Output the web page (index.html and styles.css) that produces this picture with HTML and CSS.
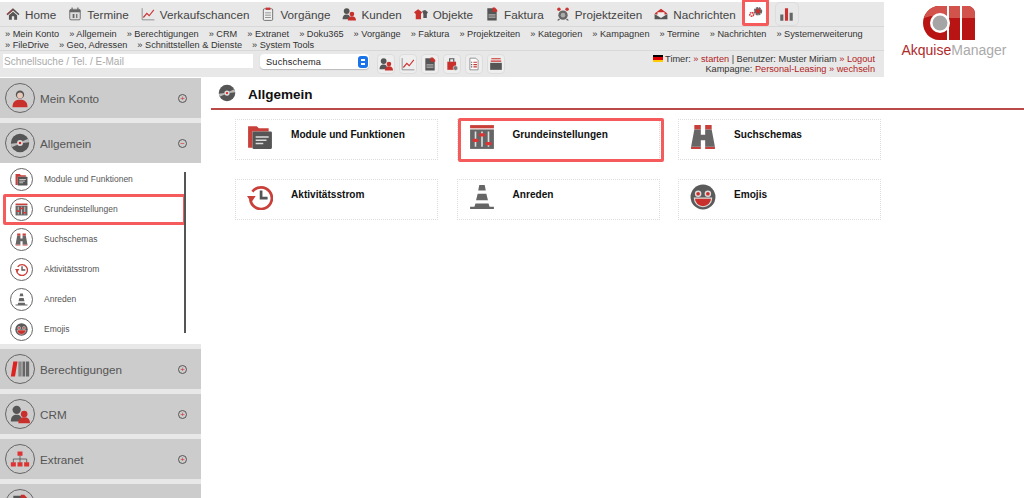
FILE: index.html
```html
<!DOCTYPE html>
<html lang="de">
<head>
  <meta charset="UTF-8" />
  <meta name="viewport" content="width=device-width, initial-scale=1.0" />
  <title>AkquiseManager - Allgemein</title>
  <link rel="stylesheet" href="styles.css">
</head>
<body>
  <svg class="sprite" xmlns="http://www.w3.org/2000/svg">
    <symbol id="i-home" viewBox="0 0 24 24"><path fill="#555" d="M12 2 1 12l1.500 2L12 6l9.500 8 1.500-2zM5 14l7-6 7 6v8h-5v-6h-4v6H5z"/><path fill="#b33" d="M12 2 1 12l1.500 2L12 6z" opacity=".5"/></symbol>
    <symbol id="i-cal" viewBox="0 0 24 24"><rect x="3" y="4" width="18" height="18" rx="2" fill="#ddd" stroke="#666" stroke-width="1.500"/><path fill="#666" d="M3 5h18v4H3zM6 1h2v5H6zM16 1h2v5h-2zM8 12h3v7H8zM14 12h2v7h-2z"/></symbol>
    <symbol id="i-chart" viewBox="0 0 24 24"><path fill="none" stroke="#888" stroke-width="1.500" d="M2 2v20h21"/><path fill="none" stroke="#c33" stroke-width="2" d="M4 18l6-7 4 4 8-10"/></symbol>
    <symbol id="i-clip" viewBox="0 0 24 24"><rect x="4" y="3" width="16" height="20" rx="2" fill="#eee" stroke="#666" stroke-width="1.500"/><rect x="8" y="1" width="8" height="4" fill="#c33"/><path stroke="#888" stroke-width="1.500" d="M7 10h10M7 14h10M7 18h10"/></symbol>
    <symbol id="i-people" viewBox="0 0 24 24"><circle cx="8" cy="7" r="5" fill="#555"/><path fill="#555" d="M1 21c0-6 3-8 7-8s6 2 6 8z"/><circle cx="17" cy="12" r="4" fill="#c9302c"/><path fill="#c9302c" d="M10 23c0-5 3-7 7-7s7 2 7 7z"/></symbol>
    <symbol id="i-obj" viewBox="0 0 24 24"><path fill="#c9302c" d="M0 9l7-5 7 5-2 3v9H3v-9z"/><path fill="#555" d="M14 7l5-2 5 4-2 3v7h-6v-7l-1-2z"/></symbol>
    <symbol id="i-doc" viewBox="0 0 24 24"><path fill="#555" d="M4 2h12l4 4v17H4z"/><path fill="#c9302c" d="M13 1h4l4 4v3h-8z"/><path fill="#999" d="M6 12h12v7H6z"/><path stroke="#555" d="M6 15.500h12"/></symbol>
    <symbol id="i-clock" viewBox="0 0 24 24"><circle cx="12" cy="14" r="8" fill="#666"/><circle cx="12" cy="14" r="4" fill="#aaa"/><path fill="#666" d="M4 20l-2 3h3l2-2zM20 20l2 3h-3l-2-2z"/><circle cx="5" cy="4" r="3" fill="#c33"/><circle cx="19" cy="4" r="3" fill="#c33"/></symbol>
    <symbol id="i-mail" viewBox="0 0 24 24"><path fill="#c9302c" d="M1 11 12 3l11 8-3 2H4z"/><path fill="#eee" d="M6 9h12v5l-6 3-6-3z"/><path fill="#555" d="M1 12l11 7 11-7v9H1z"/></symbol>
    <symbol id="i-gears" viewBox="0 0 24 24"><circle cx="16" cy="10" r="5" fill="#c9302c" stroke="#666" stroke-width="3.500" stroke-dasharray="3 1"/><circle cx="6" cy="15" r="3" fill="#fff" stroke="#d33" stroke-width="2.500" stroke-dasharray="2.500 .8"/></symbol>
    <symbol id="i-bars" viewBox="0 0 24 24"><path fill="#666" d="M2 12h5v10H2zM17 9h5v13h-5z"/><path fill="#c33" d="M9.500 2h5v20h-5z"/></symbol>
    <symbol id="i-bag" viewBox="0 0 24 24"><path fill="#c9302c" d="M4 8h15v14H4z"/><path fill="none" stroke="#555" stroke-width="2" d="M8 8V3h7v5"/><circle cx="18" cy="19" r="4" fill="#777" stroke="#eee"/></symbol>
    <symbol id="i-list" viewBox="0 0 24 24"><path fill="#fff" stroke="#888" stroke-width="1.500" d="M5 2h10l4 4v16H5z"/><path stroke="#c33" stroke-width="2" d="M11 9h6M11 13h6M11 17h6"/><path stroke="#555" stroke-width="2" d="M7 9h2M7 13h2M7 17h2"/></symbol>
    <symbol id="i-box" viewBox="0 0 24 24"><path fill="#c9302c" d="M4 2h16v2H4zM3 6h18v2H3z"/><path fill="#555" d="M2 10h20v12H2z"/></symbol>
    <symbol id="i-person" viewBox="0 0 24 24"><circle cx="12" cy="8" r="5" fill="#555"/><circle cx="12" cy="9" r="3.500" fill="#e8c8b8"/><path fill="#c9302c" d="M3 23c0-7 4-9 9-9s9 2 9 9z"/></symbol>
    <symbol id="i-disc" viewBox="0 0 24 24"><circle cx="12" cy="12" r="11" fill="#555"/><path fill="#bbb" d="M1 13l8-1v2l-7 3zM23 11l-8 1v-2l7-3z"/><circle cx="12" cy="12" r="3.500" fill="#ddd"/><circle cx="12" cy="12" r="1.500" fill="#d22"/></symbol>
    <symbol id="i-folder" viewBox="0 0 24 24"><path fill="#c9403a" d="M1 2h8l2 2h9v3H5v15H1z"/><rect x="5" y="7" width="18" height="16" rx="1" fill="#555"/><path stroke="#ddd" stroke-width="1.500" d="M8 12h12M8 15h10M8 18h7"/></symbol>
    <symbol id="i-mixer" viewBox="0 0 24 24"><path fill="#c9403a" d="M1 1h22v3H1z"/><path fill="#666" d="M1 5h22v18H1z"/><path stroke="#ddd" stroke-width="1.500" d="M6 7v14M12 7v14M18 7v14"/><path stroke="#d33" stroke-width="3" stroke-linecap="round" d="M4.500 15h3M10.500 10h3M16.500 18h3"/></symbol>
    <symbol id="i-bino" viewBox="0 0 24 24"><path fill="#c9403a" d="M4 1h6v4H4zM14 1h6v4h-6zM1 21h9v2H1zM14 21h9v2h-9z"/><path fill="#666" d="M4 5h6v5h4V5h6l3 16h-9v-6h-4v6H1z"/></symbol>
    <symbol id="i-hist" viewBox="0 0 24 24"><path fill="none" stroke="#c9403a" stroke-width="2.500" d="M5 7a10 10 0 1 1-2 7"/><path fill="#c9403a" d="M0 11h8l-4 6z"/><path fill="none" stroke="#555" stroke-width="2.500" d="M13 6v7h6"/></symbol>
    <symbol id="i-cone" viewBox="0 0 24 24"><path fill="#666" d="M9.500 1h5l1 5h-7zM8 9h8l1.500 6h-11zM6 18h12l1 3h4v2H1v-2h4z"/></symbol>
    <symbol id="i-emoji" viewBox="0 0 24 24"><circle cx="12" cy="12" r="11.500" fill="#5a5a5a"/><circle cx="7.500" cy="9" r="3" fill="#ddd"/><circle cx="16.500" cy="9" r="3" fill="#ddd"/><circle cx="7.500" cy="9" r="1.700" fill="#c9302c"/><circle cx="16.500" cy="9" r="1.700" fill="#c9302c"/><path fill="#c9302c" stroke="#ddd" d="M4 13h16c0 5-4 8-8 8s-8-3-8-8z"/></symbol>
    <symbol id="i-books" viewBox="0 0 24 24"><path fill="#d22" d="M4 3h5L6 21H1z"/><path fill="#888" d="M10 3h4v18h-4z"/><path fill="#666" d="M15 3h3v18h-3zM19 3h4v18h-4z"/></symbol>
    <symbol id="i-net" viewBox="0 0 24 24"><path fill="#d33" d="M9 3h6v5H9zM1 16h6v5H1zM9 16h6v5H9zM17 16h6v5h-6z"/><path fill="none" stroke="#555" d="M12 8v8M4 16v-4h16v4"/></symbol>
  </svg>

  <header class="top">
    <div class="top-bars">
      <nav class="main-nav">
        <a class="nav-item"><svg><use href="#i-home"/></svg>Home</a>
        <a class="nav-item"><svg><use href="#i-cal"/></svg>Termine</a>
        <a class="nav-item"><svg><use href="#i-chart"/></svg>Verkaufschancen</a>
        <a class="nav-item"><svg><use href="#i-clip"/></svg>Vorgänge</a>
        <a class="nav-item"><svg><use href="#i-people"/></svg>Kunden</a>
        <a class="nav-item"><svg><use href="#i-obj"/></svg>Objekte</a>
        <a class="nav-item"><svg><use href="#i-doc"/></svg>Faktura</a>
        <a class="nav-item"><svg><use href="#i-clock"/></svg>Projektzeiten</a>
        <a class="nav-item"><svg><use href="#i-mail"/></svg>Nachrichten</a>
        <a class="nav-tab nav-tab-marked"><svg><use href="#i-gears"/></svg></a>
        <a class="nav-tab"><svg><use href="#i-bars"/></svg></a>
      </nav>
      <div class="sub-nav">
        <a>» Mein Konto</a><a>» Allgemein</a><a>» Berechtigungen</a><a>» CRM</a><a>» Extranet</a><a>» Doku365</a><a>» Vorgänge</a><a>» Faktura</a><a>» Projektzeiten</a><a>» Kategorien</a><a>» Kampagnen</a><a>» Termine</a><a>» Nachrichten</a><a>» Systemerweiterung</a><a>» FileDrive</a><a>» Geo, Adressen</a><a>» Schnittstellen &amp; Dienste</a><a>» System Tools</a>
      </div>
      <div class="tool-row">
        <input class="quick-search" type="text" placeholder="Schnellsuche / Tel. / E-Mail" />
        <div class="schema-select">Suchschema<span class="stepper"><i></i><i></i></span></div>
        <div class="tool-icons">
          <a><svg><use href="#i-people"/></svg></a>
          <a><svg><use href="#i-chart"/></svg></a>
          <a><svg><use href="#i-doc"/></svg></a>
          <a><svg><use href="#i-bag"/></svg></a>
          <a><svg><use href="#i-list"/></svg></a>
          <a><svg><use href="#i-box"/></svg></a>
        </div>
        <div class="status">
          <div><span class="flag"></span> Timer: <b>» starten</b> | Benutzer: Muster Miriam <b>» Logout</b></div>
          <div>Kampagne: <b>Personal-Leasing » wechseln</b></div>
        </div>
      </div>
    </div>
    <div class="logo">
      <svg class="logo-mark" viewBox="0 0 52 34">
        <path fill="#b81414" d="M16 0h8v34h-8C7 34 0 26 0 17S7 0 16 0zM26 0h11v34H26zM39 0h5c5 0 8 3 8 8v26H39z"/>
        <path fill="#d2524c" d="M16 0h8v10H8L1 12C3 5 9 0 16 0zM26 0h11v12H26zM39 0h5c5 0 8 3 8 8v4H39z"/>
        <circle cx="17" cy="17" r="10" fill="#fff"/>
        <circle cx="17" cy="17" r="7.500" fill="#a5a5a5"/>
      </svg>
      <div class="logo-text"><span>Akquise</span>Manager</div>
    </div>
  </header>

  <div class="content">
    <aside class="sidebar">
      <div class="side-head"><span class="side-icon"><svg><use href="#i-person"/></svg></span>Mein Konto<span class="toggle">+</span></div>
      <div class="side-head"><span class="side-icon"><svg><use href="#i-disc"/></svg></span>Allgemein<span class="toggle">−</span></div>
      <ul class="side-list">
        <li><span class="sub-icon"><svg><use href="#i-folder"/></svg></span>Module und Funktionen</li>
        <li class="marked"><span class="sub-icon"><svg><use href="#i-mixer"/></svg></span>Grundeinstellungen</li>
        <li><span class="sub-icon"><svg><use href="#i-bino"/></svg></span>Suchschemas</li>
        <li><span class="sub-icon"><svg><use href="#i-hist"/></svg></span>Aktivitätsstrom</li>
        <li><span class="sub-icon"><svg><use href="#i-cone"/></svg></span>Anreden</li>
        <li><span class="sub-icon"><svg><use href="#i-emoji"/></svg></span>Emojis</li>
      </ul>
      <div class="side-head"><span class="side-icon"><svg><use href="#i-books"/></svg></span>Berechtigungen<span class="toggle">+</span></div>
      <div class="side-head"><span class="side-icon"><svg><use href="#i-people"/></svg></span>CRM<span class="toggle">+</span></div>
      <div class="side-head"><span class="side-icon"><svg><use href="#i-net"/></svg></span>Extranet<span class="toggle">+</span></div>
      <div class="side-head"><span class="side-icon"><svg><use href="#i-doc"/></svg></span></div>
    </aside>

    <main class="main">
      <h1 class="page-title"><svg><use href="#i-disc"/></svg>Allgemein</h1>
      <div class="cards">
        <a class="card"><svg><use href="#i-folder"/></svg>Module und Funktionen</a>
        <a class="card marked"><svg><use href="#i-mixer"/></svg>Grundeinstellungen</a>
        <a class="card"><svg><use href="#i-bino"/></svg>Suchschemas</a>
        <a class="card"><svg><use href="#i-hist"/></svg>Aktivitätsstrom</a>
        <a class="card"><svg><use href="#i-cone"/></svg>Anreden</a>
        <a class="card"><svg><use href="#i-emoji"/></svg>Emojis</a>
      </div>
    </main>
  </div>
</body>
</html>
```

FILE: styles.css
```css
* {
  box-sizing: border-box;
}
html, body {
  height: 498px;
  overflow: hidden;
}
body {
  margin: 0;
  padding-top: 2px;
  font-family: "Liberation Sans", Arial, sans-serif;
  background: #fff;
  color: #444;
}
.sprite {
  display: none;
}

/* top area */
.top {
  display: flex;
  height: 76px;
}
.top-bars {
  width: 884px;
  height: 75px;
  background: #e8e8e8;
}
.main-nav {
  display: flex;
  align-items: center;
  height: 24px;
  padding-left: 6px;
  font-size: 11.7px;
  color: #444;
}
.nav-item {
  display: flex;
  align-items: center;
  margin-right: 12px;
}
.nav-item svg {
  width: 14px;
  height: 14px;
  margin-right: 5px;
}
.nav-tab {
  display: flex;
  align-items: center;
  justify-content: center;
  width: 24px;
  height: 24px;
  margin-right: 6px;
  border: 1px solid #ddd;
  border-radius: 5px;
}
.nav-tab svg {
  width: 15px;
  height: 15px;
}
.nav-tab-marked {
  width: 27px;
  height: 27px;
  margin-top: -4px;
  margin-left: -6px;
  background: #fff;
  border: 3px solid #f55b5b;
  border-radius: 2px;
}
.sub-nav {
  height: 25px;
  padding: 2px 0 0 5px;
  border-top: 1px solid #d8d8d8;
  border-bottom: 1px solid #d8d8d8;
  font-size: 9.2px;
  line-height: 11px;
  color: #333;
}
.sub-nav a {
  margin-right: 10px;
  display: inline-block;
}
.tool-row {
  display: flex;
  align-items: flex-start;
  padding: 3px 9px 0 3px;
}
.quick-search {
  width: 250px;
  height: 14px;
  padding: 0 1px;
  border: 0;
  font: 10px "Liberation Sans", Arial, sans-serif;
}
.quick-search::placeholder {
  color: #aaa;
}
.schema-select {
  display: flex;
  align-items: center;
  justify-content: space-between;
  width: 109px;
  height: 15px;
  margin-left: 7px;
  padding: 0 1px 0 6px;
  background: #fff;
  border-radius: 4px;
  font-size: 9.2px;
  letter-spacing: .2px;
  color: #222;
  box-shadow: 0 1px 1px #bbb;
}
.stepper {
  display: flex;
  flex-direction: column;
  justify-content: center;
  gap: 2px;
  width: 10px;
  height: 12px;
  background: #1a73e8;
  border-radius: 3px;
}
.stepper i {
  width: 4px;
  height: 2px;
  margin: 0 auto;
  background: #fff;
}
.tool-icons {
  display: flex;
  gap: 4px;
  margin-left: 8px;
}
.tool-icons a {
  display: flex;
  align-items: center;
  justify-content: center;
  width: 18px;
  height: 20px;
  background: #eee;
  border: 1px solid #ddd;
  border-radius: 4px;
}
.tool-icons svg {
  width: 14px;
  height: 14px;
}
.status {
  margin-left: auto;
  text-align: right;
  font-size: 9.2px;
  line-height: 10px;
  color: #333;
}
.status b {
  font-weight: normal;
  color: #b22222;
}
.flag {
  display: inline-block;
  width: 10px;
  height: 7px;
  background: linear-gradient(#000 33%, #d00 33%, #d00 66%, #fc0 66%);
}
.logo {
  flex: 1;
  display: flex;
  flex-direction: column;
  align-items: center;
  padding-top: 4px;
}
.logo-mark {
  width: 52px;
  height: 34px;
  margin-right: 10px;
}
.logo-text {
  margin-top: 2px;
  font-size: 14px;
  color: #aaa;
}
.logo-text span {
  color: #b02a2a;
}

/* sidebar and content */
.content {
  display: flex;
}
.sidebar {
  width: 201px;
  height: 420px;
  overflow: hidden;
  background: #e8e8e8;
}
.side-head {
  display: flex;
  align-items: center;
  height: 40px;
  margin-bottom: 5px;
  padding-left: 5px;
  background: #ccc;
  font-size: 11.7px;
  color: #555;
}
.side-icon {
  display: flex;
  align-items: center;
  justify-content: center;
  width: 30px;
  height: 30px;
  margin-right: 5px;
  border: 1px solid #666;
  border-radius: 50%;
}
.side-icon svg {
  width: 20px;
  height: 20px;
}
.toggle {
  width: 9px;
  height: 9px;
  margin: 0 14px 0 auto;
  border: 1px solid #555;
  border-radius: 50%;
  font-size: 8px;
  line-height: 7px;
  text-align: center;
  color: #c33;
}
.side-list {
  height: 181px;
  margin: -5px 0 5px;
  padding: 1px 0 0;
  list-style: none;
  background: #fff;
  position: relative;
  font-size: 8.5px;
  color: #555;
}
.side-list::after {
  content: "";
  position: absolute;
  top: 9px;
  left: 184px;
  width: 2px;
  height: 161px;
  background: #555;
}
.side-list li {
  display: flex;
  align-items: center;
  height: 30px;
  padding-left: 10px;
  position: relative;
}
.sub-icon {
  display: flex;
  align-items: center;
  justify-content: center;
  width: 23px;
  height: 23px;
  margin-right: 11px;
  background: #fff;
  border: 1px solid #666;
  border-radius: 50%;
}
.sub-icon svg {
  width: 13px;
  height: 13px;
}
.side-list li.marked::after {
  content: "";
  position: absolute;
  top: 0;
  left: 3px;
  width: 177px;
  height: 25px;
  border: 3px solid #f55b5b;
  border-radius: 2px;
}
.main {
  flex: 1;
  padding-left: 10px;
}
.page-title {
  display: flex;
  align-items: center;
  height: 32px;
  margin: 0;
  padding: 2px 0 0 7px;
  border-bottom: 2px solid #b94a48;
  font-size: 13.5px;
  color: #111;
}
.page-title svg {
  width: 18px;
  height: 18px;
  margin: -3px 12px 0 0;
}
.cards {
  display: grid;
  grid-template-columns: repeat(3, 203px);
  gap: 19px 18.5px;
  margin: 9px 0 0 24px;
}
.card {
  display: flex;
  align-items: flex-start;
  height: 41px;
  padding: 4px 0 0 11px;
  border: 1px dotted #ddd;
  font-size: 10.1px;
  font-weight: bold;
  line-height: 22px;
  color: #111;
  position: relative;
}
.card svg {
  width: 26px;
  height: 26px;
  margin-right: 18px;
}
.card.marked::after {
  content: "";
  position: absolute;
  top: -2px;
  left: 0;
  right: -5px;
  bottom: -3px;
  border: 3px solid #f55b5b;
  border-radius: 2px;
}
```
